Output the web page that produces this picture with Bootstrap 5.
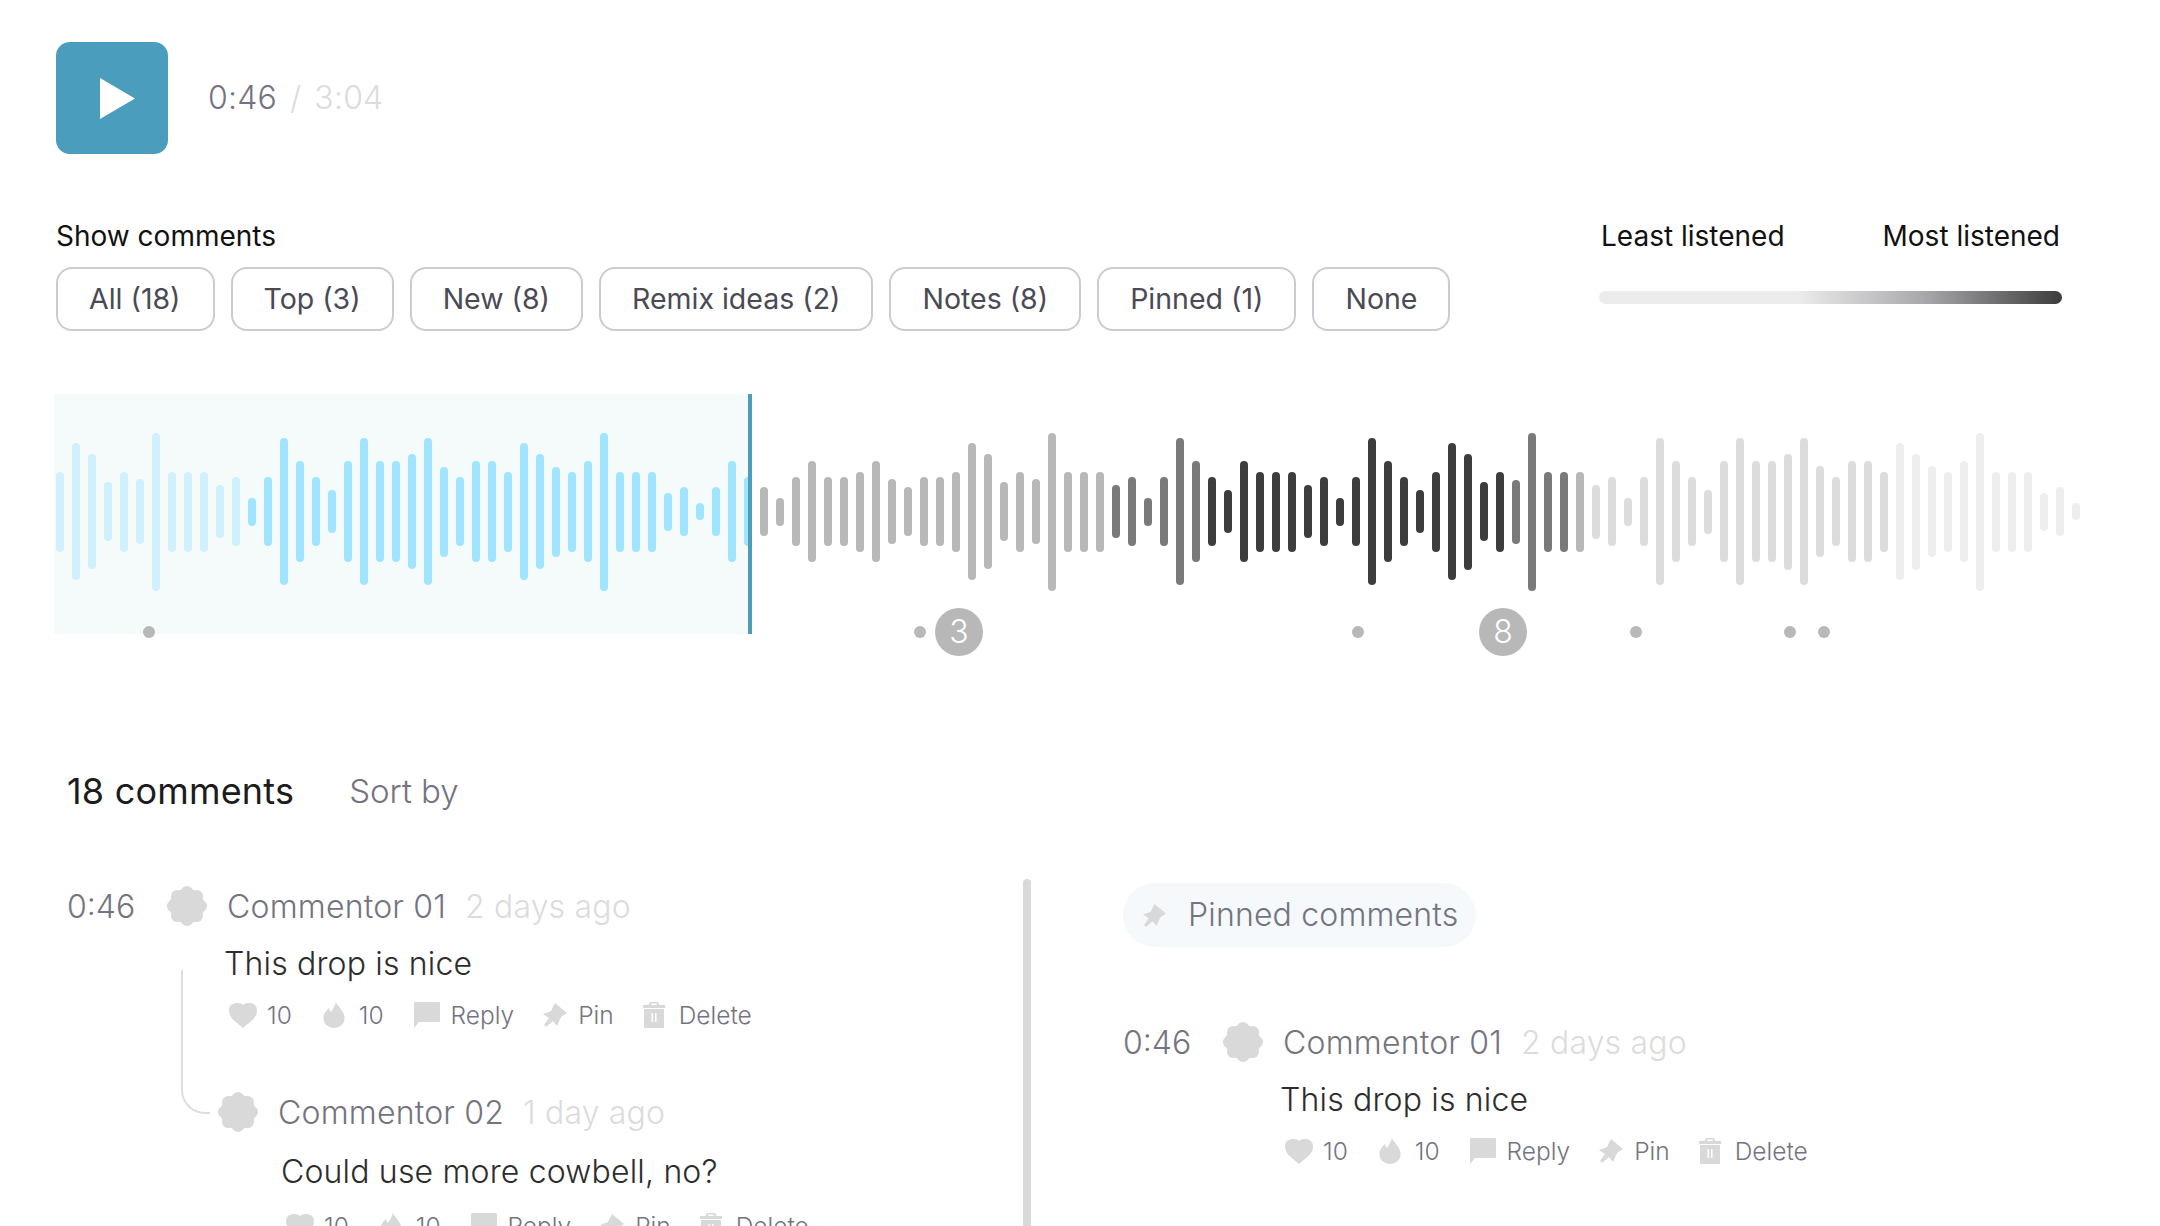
<!doctype html>
<html lang="en">
<head>
<meta charset="utf-8">
<title>Waveform comments</title>
<link rel="stylesheet" href="https://cdn.jsdelivr.net/npm/bootstrap@5.3.0/dist/css/bootstrap.min.css">
<style>
html,body{margin:0;height:100vh;overflow:hidden;background:#fff}
body{font-family:Inter,"Liberation Sans",sans-serif;color:#1c1c20}
.page{padding:42px 0 0 56px;height:100vh;overflow:hidden}
.play-btn{width:112px;height:112px;border-radius:14px;background:#4a9dbc;border:0;padding:0 0 0 11px}
.time-now{font-size:32px;font-weight:350;letter-spacing:.2px;color:#74737f;margin-left:40px;line-height:40px}
.time-dim{color:#dcdcdc}
.time-slash{color:#dcdcdc;margin:0 13px}
.filters-row{margin-top:63px;width:2006px}
.lab{font-size:28px;line-height:36px;color:#111;padding-top:1px}
.filter-btn{height:64px;padding:0 31px;font-size:28.5px;line-height:1;color:#4a4a55;background:#fff;border:2px solid #cbcbd1;border-radius:16px}
.filter-first{margin-right:0;padding-right:32px}
.filter-gap{gap:16px;margin-top:13px}
.legend{width:463px}
.legend-bar{height:13px;margin-top:37px;border-radius:7px;background:linear-gradient(90deg,#ececec 43%,#a9a9ad 70%,#3d3d3d 100%)}
.legend-labels{padding:1px 2px 0}
.wave{position:relative;height:240px;margin:63px 0 0 -2px;width:2040px}
.played{position:absolute;left:0;top:0;width:694px;height:240px;background:#f5fafb}
.playhead{position:absolute;left:694px;top:0;width:4px;height:240px;background:#4a9dbc}
.bars{position:relative;height:235px;padding-left:2px;gap:8px}
.wbar{width:8px;border-radius:4px;flex:none}
.marker{position:absolute;top:232px;width:12px;height:12px;margin-left:-6px;border-radius:50%;background:#b8b8b8}
.marker-big{top:214px;width:48px;height:48px;margin-left:-24px;font-size:32px;font-weight:300;color:#fff;line-height:48px;text-align:center}
.count-row{margin:133px 0 0 11px;height:48px}
.count-title{font-size:36px;line-height:48px;color:#1c1c20;letter-spacing:.2px}
.sort-by{font-size:33px;color:#74737f;margin-left:55px;font-weight:350;padding-top:1px}
.cols{margin-top:64px}
.left-col{width:967px;padding:7px 0 0 12px;height:400px}
.vr-line{width:8px;height:400px;border-radius:4px 4px 0 0;background:#d9d9d9}
.right-col{margin-left:92px;padding-top:4px}
.pin-pill{height:64px;width:353px;border-radius:32px;background:#f5f9fb;padding-left:20px;font-size:32px;font-weight:350;letter-spacing:.17px;color:#74737f;gap:22px}
.pin-pill svg{width:23px;height:23px}
.pinned-item{margin:75px 0 0 1px}
.chead{height:40px}
.stamp{font-size:32px;font-weight:350;color:#74737f;width:100px;margin-left:-1px;line-height:40px;padding-top:1px}
.ava{width:40px;height:40px;flex:none}
.cname{font-size:32px;font-weight:350;letter-spacing:.2px;color:#74737f;margin-left:20px;line-height:40px;padding-top:1px}
.cago{font-size:32px;font-weight:350;letter-spacing:.17px;color:#dcdcdc;margin-left:19px;line-height:40px;padding-top:1px}
.ctext{font-size:32px;font-weight:350;letter-spacing:.17px;line-height:48px;color:#2d2d2d;margin:14px 0 0 156px}
.acts{margin:13px 0 0 161px;height:28px;font-size:24.5px;font-weight:350;color:#74737f;gap:30px;white-space:nowrap}
.act{gap:12px;padding-top:1px}
.act svg{height:26px;flex:none;fill:#d9d9d9;margin-top:-1px}
.act-heart{gap:10px;margin-right:1px}
.act-flame{gap:14px}
.act-reply{gap:11px;margin-right:-1px}
.act-pin{gap:11px;margin-right:-2px}
.act-del{gap:13px}
.nested{position:relative;margin:63px 0 0 150px}
.nested .ctext{margin-left:63px;margin-top:16px}
.nested .acts{margin-left:68px;margin-top:16px}
.tree{position:absolute;left:-37px;top:-122px;width:29px;height:144px;border-left:2px solid #dedede;border-bottom:2px solid #dedede;border-bottom-left-radius:24px}
</style>
</head>
<body>
<svg width="0" height="0" class="d-none">
<defs>
<symbol id="i-ava" viewBox="0 0 40 40"><g fill="#d9d9d9"><circle cx="20" cy="20" r="17.400"/><circle cx="20" cy="6.500" r="6.500"/><circle cx="29.550" cy="10.450" r="6.500"/><circle cx="33.500" cy="20" r="6.500"/><circle cx="29.550" cy="29.550" r="6.500"/><circle cx="20" cy="33.500" r="6.500"/><circle cx="10.450" cy="29.550" r="6.500"/><circle cx="6.500" cy="20" r="6.500"/><circle cx="10.450" cy="10.450" r="6.500"/></g></symbol>
<symbol id="i-heart" viewBox="0 0 28 26"><path d="M14 26C9 21 0 17 0 8.500 0 3 4 1 8 1c3 0 5 .8 6 2 1-1.200 3-2 6-2 4 0 8 2 8 7.500C28 17 19 21 14 26Z"/></symbol>
<symbol id="i-flame" viewBox="0 0 22 27"><path d="M13 0c1 4 9 9 9 17 0 6-5 10-11 10S0 23 0 17c0-5 3-8 6-11 0 3 1 4 2 4 2-3 4-6 5-10Z"/></symbol>
<symbol id="i-reply" viewBox="0 0 26 26"><path d="M1 0h24a1 1 0 0 1 1 1v18a1 1 0 0 1-1 1H5l-5 6V1a1 1 0 0 1 1-1Z"/></symbol>
<symbol id="i-pin" viewBox="0 0 24 24"><path d="M12 0 24 10l-6 4-4 9-4-5-7 6-2-2 5-7-6-4 8-3Z"/></symbol>
<symbol id="i-trash" viewBox="0 0 24 26"><path d="M8 0h8l1.500 3H23v3H1V3h5.500ZM9.500 1.500 9 3h6l-.5-1.500Z" fill-rule="evenodd"/><path d="M2 7h20v19H2ZM9.500 11v9H11v-9Zm3.500 0v9h1.500v-9Z" fill-rule="evenodd"/></symbol>
</defs>
</svg>
<div class="page">
  <div class="d-flex align-items-center">
    <button class="play-btn d-flex align-items-center justify-content-center" aria-label="Play">
      <svg width="35" height="41" viewBox="0 0 35 41" class="d-block"><path d="M0 0 35 20.500 0 41Z" fill="#fff"/></svg>
    </button>
    <div class="time-now">0:46<span class="time-slash">/</span><span class="time-dim">3:04</span></div>
  </div>

  <div class="filters-row d-flex justify-content-between">
    <div>
      <div class="lab">Show comments</div>
      <div class="d-flex filter-gap">
        <button class="btn filter-btn filter-first">All (18)</button>
        <button class="btn filter-btn">Top (3)</button>
        <button class="btn filter-btn">New (8)</button>
        <button class="btn filter-btn">Remix ideas (2)</button>
        <button class="btn filter-btn">Notes (8)</button>
        <button class="btn filter-btn">Pinned (1)</button>
        <button class="btn filter-btn">None</button>
      </div>
    </div>
    <div class="legend">
      <div class="legend-labels d-flex justify-content-between lab"><span>Least listened</span><span>Most listened</span></div>
      <div class="legend-bar"></div>
    </div>
  </div>

  <div class="wave">
    <div class="played"></div>
    <div class="bars d-flex align-items-center" id="bars"></div>
    <div class="playhead"></div>
    <span class="marker" style="left:95px"></span>
    <span class="marker" style="left:866px"></span>
    <span class="marker marker-big" style="left:905px">3</span>
    <span class="marker" style="left:1304px"></span>
    <span class="marker marker-big" style="left:1449px">8</span>
    <span class="marker" style="left:1582px"></span>
    <span class="marker" style="left:1736px"></span>
    <span class="marker" style="left:1770px"></span>
  </div>

  <div class="count-row d-flex align-items-center">
    <div class="count-title">18 comments</div>
    <div class="sort-by">Sort by</div>
  </div>

  <div class="cols d-flex">
    <div class="left-col">
      <div class="chead d-flex align-items-center">
        <div class="stamp">0:46</div>
        <svg class="ava"><use href="#i-ava"/></svg>
        <div class="cname">Commentor 01</div><div class="cago">2 days ago</div>
      </div>
      <div class="ctext">This drop is nice</div>
      <div class="acts d-flex align-items-center">
        <span class="act act-heart d-flex align-items-center"><svg width="28"><use href="#i-heart"/></svg>10</span>
        <span class="act act-flame d-flex align-items-center"><svg width="22"><use href="#i-flame"/></svg>10</span>
        <span class="act act-reply d-flex align-items-center"><svg width="26"><use href="#i-reply"/></svg>Reply</span>
        <span class="act act-pin d-flex align-items-center"><svg width="24"><use href="#i-pin"/></svg>Pin</span>
        <span class="act act-del d-flex align-items-center"><svg width="24"><use href="#i-trash"/></svg>Delete</span>
      </div>
      <div class="nested">
        <div class="tree"></div>
        <div class="chead d-flex align-items-center">
          <svg class="ava"><use href="#i-ava"/></svg>
          <div class="cname">Commentor 02</div><div class="cago">1 day ago</div>
        </div>
        <div class="ctext">Could use more cowbell, no?</div>
        <div class="acts d-flex align-items-center">
          <span class="act act-heart d-flex align-items-center"><svg width="28"><use href="#i-heart"/></svg>10</span>
          <span class="act act-flame d-flex align-items-center"><svg width="22"><use href="#i-flame"/></svg>10</span>
          <span class="act act-reply d-flex align-items-center"><svg width="26"><use href="#i-reply"/></svg>Reply</span>
          <span class="act act-pin d-flex align-items-center"><svg width="24"><use href="#i-pin"/></svg>Pin</span>
          <span class="act act-del d-flex align-items-center"><svg width="24"><use href="#i-trash"/></svg>Delete</span>
        </div>
      </div>
    </div>
    <div class="vr-line"></div>
    <div class="right-col">
      <div class="pin-pill d-flex align-items-center"><svg><use href="#i-pin" fill="#d9d9d9"/></svg>Pinned comments</div>
      <div class="pinned-item">
        <div class="chead d-flex align-items-center">
          <div class="stamp">0:46</div>
          <svg class="ava"><use href="#i-ava"/></svg>
          <div class="cname">Commentor 01</div><div class="cago">2 days ago</div>
        </div>
        <div class="ctext">This drop is nice</div>
        <div class="acts d-flex align-items-center">
          <span class="act act-heart d-flex align-items-center"><svg width="28"><use href="#i-heart"/></svg>10</span>
          <span class="act act-flame d-flex align-items-center"><svg width="22"><use href="#i-flame"/></svg>10</span>
          <span class="act act-reply d-flex align-items-center"><svg width="26"><use href="#i-reply"/></svg>Reply</span>
          <span class="act act-pin d-flex align-items-center"><svg width="24"><use href="#i-pin"/></svg>Pin</span>
          <span class="act act-del d-flex align-items-center"><svg width="24"><use href="#i-trash"/></svg>Delete</span>
        </div>
      </div>
    </div>
  </div>
</div>
<script>
var tops=[275,190,222,307,275,298,158,275,275,275,315,291,353,291,174,243,291,330,243,174,243,243,222,174,260,291,243,243,275,190,222,260,275,243,158,275,275,275,338,322,369,322,243,291,
322,353,291,243,291,291,275,243,298,322,291,291,275,190,222,307,275,298,158,275,275,275,315,291,353,291,174,243,291,330,243,275,275,275,315,291,353,291,174,243,291,330,275,190,
221,306,275,299,158,275,275,275,314,291,353,291,174,244,291,329,244,174,244,244,221,174,259,291,244,244,275,189,221,259,275,244,158,275,275,275,338,321,369];
function color(i){var n=i+1;
 if(n<=12)return '#d0f0fb'; if(n<=44)return '#a0e5fd'; if(n<=66)return '#b8b8b8';
 if(n<=72)return '#7a7a7a'; if(n<=91)return '#3d3d3d'; if(n<=95)return '#7a7a7a';
 if(n===96)return '#b8b8b8'; if(n<=115)return '#dcdcdc'; return '#eeeeee';}
var box=document.getElementById('bars');
tops.forEach(function(t,i){var s=document.createElement('span');s.className='wbar';
 s.style.height=Math.round((395-t)*2/3)+'px';s.style.background=color(i);box.appendChild(s);});
</script>
<script src="https://cdn.jsdelivr.net/npm/bootstrap@5.3.0/dist/js/bootstrap.bundle.min.js"></script>
</body>
</html>
